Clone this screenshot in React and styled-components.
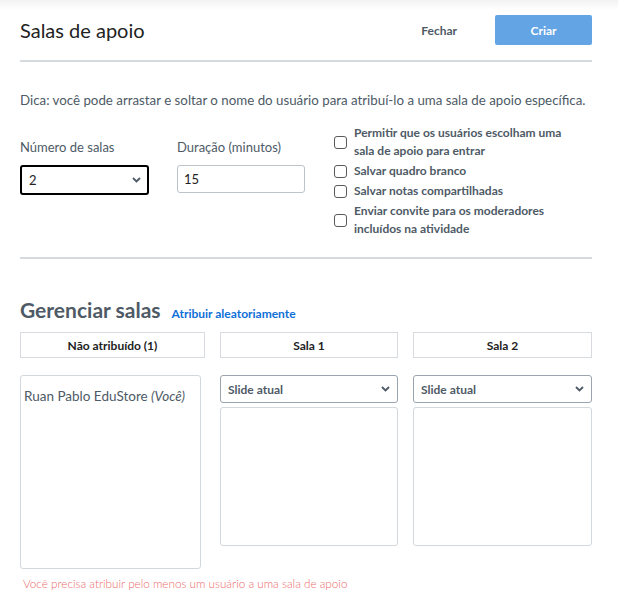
import styled, { createGlobalStyle } from "styled-components";

const GlobalStyle = createGlobalStyle`
  * { box-sizing: border-box; }
  body {
    margin: 0;
    background: #fff;
    font-family: "Lato", "Open Sans", sans-serif;
    color: #4e5a66;
  }
`;

const Page = styled.div`
  width: 618px;
  height: 606px;
  padding: 15px 26px 0 20px;
  background: linear-gradient(#f2f2f2 0, #fff 10px);
`;

const Header = styled.header`
  display: flex;
  align-items: center;
  height: 30px;
`;

const Title = styled.h1`
  flex: 1;
  margin: 0;
  font-size: 20px;
  font-weight: 400;
  color: #222;
`;

const LinkButton = styled.button`
  border: 0;
  background: none;
  font: inherit;
  font-size: 12px;
  font-weight: 700;
  color: #4e5a66;
  margin-right: 38px;
  padding: 0;
`;

const PrimaryButton = styled.button`
  width: 97px;
  height: 30px;
  border: 0;
  border-radius: 2px;
  background: #63a4e5;
  color: #fff;
  font: inherit;
  font-size: 12px;
  font-weight: 700;
`;

const Divider = styled.hr`
  margin: ${(p) => p.$top}px 0 0;
  border: 0;
  height: 2px;
  background: #d5dadf;
`;

const Hint = styled.p`
  margin: 28px 0 0;
  font-size: 13.3px;
  line-height: 20px;
`;

const Controls = styled.div`
  display: flex;
  align-items: flex-start;
  margin-top: 14px;
`;

const Field = styled.label`
  display: flex;
  flex-direction: column;
  width: ${(p) => p.$width}px;
  margin-right: ${(p) => p.$gap}px;
  padding-top: 14px;
`;

const FieldLabel = styled.span`
  font-size: 13px;
  line-height: 18px;
  margin-bottom: 9px;
`;

const FakeSelect = styled.div`
  display: flex;
  align-items: center;
  justify-content: space-between;
  height: ${(p) => p.$height}px;
  padding: 0 ${(p) => (p.$focused ? 6 : 7)}px 0 7px;
  border: ${(p) => (p.$focused ? "2px solid #000" : "1px solid #9aa4ae")};
  border-radius: 3px;
  background: #fff;
  font-size: ${(p) => (p.$bold ? 12 : 13)}px;
  font-weight: ${(p) => (p.$bold ? 700 : 400)};
  color: ${(p) => (p.$bold ? "#4e5a66" : "#222")};
`;

const TextInput = styled.div`
  display: flex;
  align-items: center;
  height: 28px;
  padding: 0 6px;
  border: 1px solid #bcc3ca;
  border-radius: 3px;
  font-size: 13px;
  color: #222;
`;

const Checks = styled.div`
  display: flex;
  flex-direction: column;
  gap: 2px;
  margin-left: 1px;
`;

const CheckRow = styled.label`
  display: flex;
  align-items: center;
  gap: 7px;
  font-size: 12px;
  font-weight: 700;
  line-height: 18px;
  color: #4e5a66;
`;

const Box = styled.span`
  flex: none;
  width: 13px;
  height: 13px;
  border: 1px solid #5a5a5a;
  border-radius: 3px;
  background: #fff;
`;

const SectionHead = styled.div`
  display: flex;
  align-items: baseline;
  gap: 11px;
  margin-top: 38px;
`;

const SectionTitle = styled.h2`
  margin: 0;
  font-size: 21px;
  font-weight: 700;
  color: #4e5a66;
`;

const BlueLink = styled.a`
  font-size: 12px;
  font-weight: 700;
  color: #0f70d7;
  text-decoration: none;
`;

const Rooms = styled.div`
  display: grid;
  grid-template-columns: 185px 178px 179px;
  column-gap: 15px;
  margin-top: 10px;
`;

const RoomHeader = styled.div`
  height: 26px;
  display: flex;
  align-items: center;
  justify-content: center;
  border: 1px solid #d7dbe0;
  font-size: 12px;
  font-weight: 700;
  color: #222;
`;

const Column = styled.div`
  display: flex;
  flex-direction: column;
  gap: 4px;
  margin-top: 17px;
  padding-right: ${(p) => p.$inset || 0}px;
`;

const DropZone = styled.div`
  height: ${(p) => p.$height}px;
  border: 1px solid #d3d8dd;
  border-radius: 3px;
  padding: ${(p) => p.$pad || 0}px 3px;
  font-size: 13.5px;
  color: #4e5a66;
`;

const ErrorText = styled.p`
  margin: 7px 0 0 3px;
  font-size: 11.7px;
  font-weight: 300;
  color: #ec6b6b;
`;

const Chevron = () => (
  <svg width="9" height="6" viewBox="0 0 9 6">
    <path d="M1 1l3.5 3.5L8 1" fill="none" stroke="#4e5a66" strokeWidth="1.8" />
  </svg>
);

const options = [
  ["Permitir que os usuários escolham uma", "sala de apoio para entrar"],
  ["Salvar quadro branco"],
  ["Salvar notas compartilhadas"],
  ["Enviar convite para os moderadores", "incluídos na atividade"],
];

export default function App() {
  return (
    <>
      <GlobalStyle />
      <Page>
        <Header>
          <Title>Salas de apoio</Title>
          <LinkButton>Fechar</LinkButton>
          <PrimaryButton>Criar</PrimaryButton>
        </Header>
        <Divider $top={15} />
        <Hint>
          Dica: você pode arrastar e soltar o nome do usuário para atribuí-lo a
          uma sala de apoio específica.
        </Hint>
        <Controls>
          <Field $width={129} $gap={28}>
            <FieldLabel>Número de salas</FieldLabel>
            <FakeSelect $height={30} $focused>
              2 <Chevron />
            </FakeSelect>
          </Field>
          <Field $width={128} $gap={28}>
            <FieldLabel>Duração (minutos)</FieldLabel>
            <TextInput>15</TextInput>
          </Field>
          <Checks>
            {options.map((lines) => (
              <CheckRow key={lines[0]}>
                <Box />
                <span>
                  {lines.map((l, i) => (
                    <span key={l}>
                      {i > 0 && <br />}
                      {l}
                    </span>
                  ))}
                </span>
              </CheckRow>
            ))}
          </Checks>
        </Controls>
        <Divider $top={19} />
        <SectionHead>
          <SectionTitle>Gerenciar salas</SectionTitle>
          <BlueLink href="#">Atribuir aleatoriamente</BlueLink>
        </SectionHead>
        <Rooms>
          <RoomHeader>Não atribuído (1)</RoomHeader>
          <RoomHeader>Sala 1</RoomHeader>
          <RoomHeader>Sala 2</RoomHeader>
          <Column $inset={4}>
            <DropZone $height={194} $pad={12}>
              Ruan Pablo EduStore <i>(Você)</i>
            </DropZone>
          </Column>
          <Column>
            <FakeSelect $height={28} $bold>
              Slide atual <Chevron />
            </FakeSelect>
            <DropZone $height={139} />
          </Column>
          <Column>
            <FakeSelect $height={28} $bold>
              Slide atual <Chevron />
            </FakeSelect>
            <DropZone $height={139} />
          </Column>
        </Rooms>
        <ErrorText>
          Você precisa atribuir pelo menos um usuário a uma sala de apoio
        </ErrorText>
      </Page>
    </>
  );
}
